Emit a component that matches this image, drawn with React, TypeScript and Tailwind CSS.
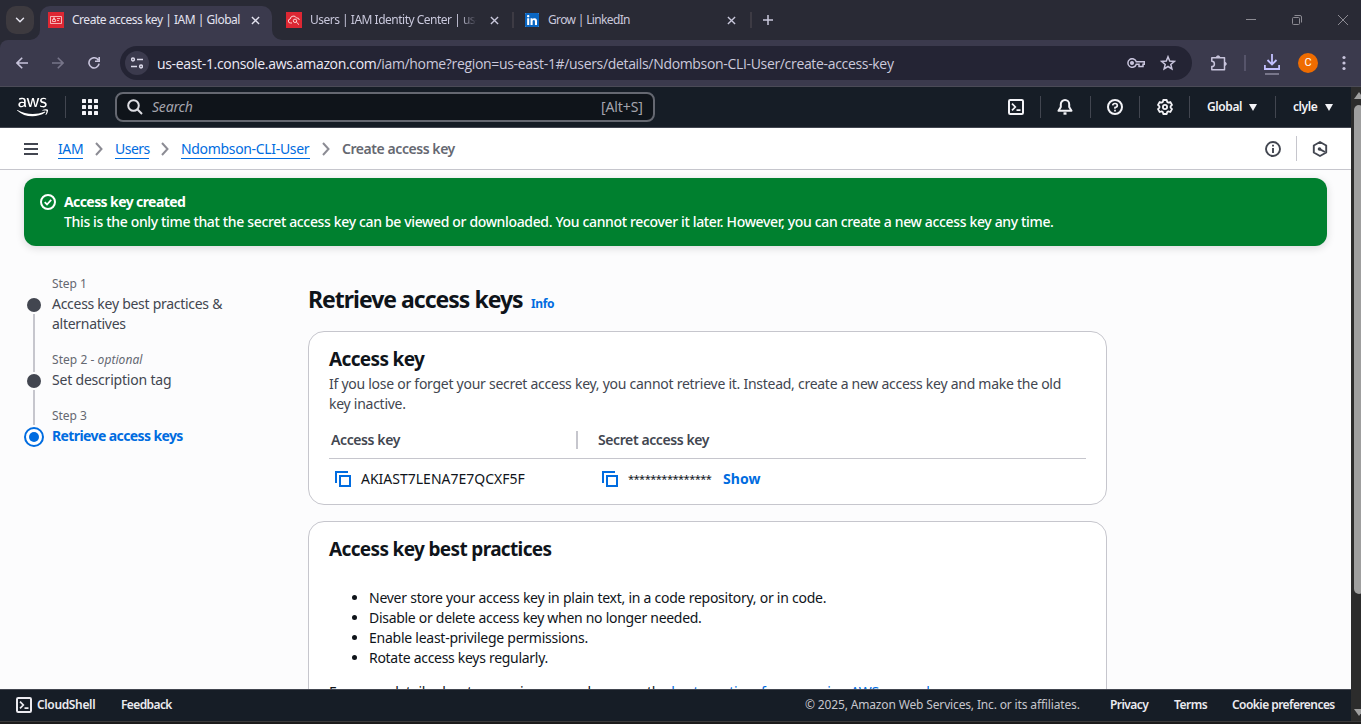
import React from "react";
import { FaAws, FaLinkedin } from "react-icons/fa";
import { ChevronDown } from "lucide-react";

const CloseX = ({ className }: { className: string }) => (
  <svg viewBox="0 0 10 10" className={className} fill="none" stroke="currentColor" strokeWidth="1.5">
    <path d="M1 1l8 8M9 1l-8 8" />
  </svg>
);

const Terminal = () => (
  <svg viewBox="0 0 16 16" className="size-4 shrink-0" fill="none" stroke="currentColor" strokeWidth="2" strokeLinejoin="round">
    <rect x="1" y="1" width="14" height="14" rx="1.2" />
    <path d="M4 4.6L7.3 8 4 11.4M8.5 11.2h4" strokeWidth="1.7" strokeLinejoin="miter" />
  </svg>
);

const Copy = () => (
  <svg viewBox="0 0 16 16" className="size-4 shrink-0 text-[#006ce0]" fill="none" stroke="currentColor" strokeWidth="2">
    <path d="M1 12V1h12" />
    <rect x="5" y="5" width="10" height="10" />
  </svg>
);

const Crumb = () => (
  <svg viewBox="0 0 8 14" className="h-3.5 w-2 shrink-0 text-[#8c8c94]" fill="none" stroke="currentColor" strokeWidth="2">
    <path d="M1 1l5.500 6L1 13" />
  </svg>
);

const Caret = () => (
  <svg viewBox="0 0 8 7" className="h-[7px] w-2 shrink-0" fill="currentColor">
    <path d="M0 0h8L4 7z" />
  </svg>
);

function TabStrip() {
  return (
    <div className="flex h-10 shrink-0 items-center bg-[#292a35] pt-0 text-[12px] text-[#c9c8dc]">
      <div className="ml-1.5 flex size-7 items-center justify-center rounded-[10px] bg-[#3d3a3f] text-[#e4e3ee]">
        <ChevronDown className="size-3.5" strokeWidth={2.5} />
      </div>
      <div className="relative ml-1.5 flex h-[34px] w-[232px] items-center self-end rounded-t-[10px] bg-[#3b3a4d] pb-1.5 pl-2 text-[#e4e3f0]">
        <svg viewBox="0 0 10 10" className="absolute bottom-0 -left-2.5 size-2.5 fill-[#3b3a4d]">
          <path d="M10 0v10H0A10 10 0 0 0 10 0z" />
        </svg>
        <svg viewBox="0 0 10 10" className="absolute -right-2.5 bottom-0 size-2.5 fill-[#3b3a4d]">
          <path d="M0 0v10h10A10 10 0 0 1 0 0z" />
        </svg>
        <svg viewBox="0 0 16 16" className="size-4 shrink-0" fill="none" stroke="#ffd5d5">
          <rect width="16" height="16" fill="#dd2733" stroke="none" />
          <path d="M2.5 4.5h11v7h-11zM9 6.5h3M9 8.5h2M4.5 9.500h3v-2h-3zM5.500 7V5.800h1V7" strokeWidth=".8" />
        </svg>
        <span className="ml-2 w-[170px] whitespace-nowrap tracking-[-0.48px]">Create access key | IAM | Global</span>
        <CloseX className="ml-[9px] size-[9px]" />
      </div>
      <svg viewBox="0 0 16 16" className="ml-3.5 size-4 shrink-0" fill="none" stroke="#ffd5d5">
        <rect width="16" height="16" fill="#dd2733" stroke="none" />
        <path d="M6 11H4.500a2 2 0 0 1-.3-4A3.300 3.300 0 0 1 10.500 6a2.300 2.300 0 0 1 2.800 2" strokeWidth="1" />
        <circle cx="9" cy="8.800" r="1.700" />
        <path d="M10.300 10l2.700 2.700" />
      </svg>
      <span className="ml-2 w-[167px] overflow-hidden whitespace-nowrap tracking-[-0.5px] [mask-image:linear-gradient(to_right,black_150px,transparent_167px)]">
        Users | IAM Identity Center | us-east-1
      </span>
      <CloseX className="ml-[13px] size-[9px]" />
      <div className="ml-[13px] h-4 w-0.5 bg-[#3d3b44]" />
      <span className="ml-[11px] flex h-[14px] w-[14px] items-center justify-center bg-white">
        <FaLinkedin className="h-4 w-[14px] shrink-0 text-[#0a66c2]" />
      </span>
      <span className="ml-[9px] w-[170px] whitespace-nowrap tracking-[-0.65px]">Grow | LinkedIn</span>
      <CloseX className="ml-[9px] size-[9px]" />
      <div className="ml-[14px] h-4 w-0.5 bg-[#3d3b44]" />
      <svg viewBox="0 0 10 10" className="ml-[11px] size-2.5" fill="none" stroke="currentColor" strokeWidth="1.500">
        <path d="M5 0v10M0 5h10" />
      </svg>
      <div className="ml-auto flex items-center gap-9 pr-[13px] text-[#8c8b93]">
        <svg viewBox="0 0 10 10" className="size-2.5" stroke="currentColor">
          <path d="M0 4.500h10" />
        </svg>
        <svg viewBox="0 0 10 10" className="size-2.5" fill="none" stroke="currentColor">
          <rect x=".5" y="2.500" width="7" height="7" rx="1" />
          <path d="M2.500 .5h5.500a1.500 1.500 0 0 1 1.500 1.500v5.500" />
        </svg>
        <svg viewBox="0 0 10 10" className="size-2.5" stroke="currentColor">
          <path d="M0 0l10 10M10 0L0 10" />
        </svg>
      </div>
    </div>
  );
}

function Toolbar() {
  return (
    <div className="h-[47px] shrink-0 bg-[#292a35]">
      <div className="flex h-full items-center rounded-tl-[8px] border-b border-[#4b4b57] bg-[#3b3a4d] text-[#c8c4dc]">
        <svg viewBox="0 0 12 12" className="ml-4 size-3" fill="none" stroke="currentColor" strokeWidth="1.600">
          <path d="M12 6H1M6.200 .8L1 6l5.200 5.200" />
        </svg>
        <svg viewBox="0 0 12 12" className="ml-6 size-3 text-[#777589]" fill="none" stroke="currentColor" strokeWidth="1.600">
          <path d="M0 6h11M5.800 .8L11 6l-5.200 5.200" />
        </svg>
        <svg viewBox="0 0 12 12" className="ml-6 size-3" fill="none" stroke="currentColor" strokeWidth="1.600">
          <path d="M10.300 3A5.100 5.100 0 1 0 11.100 6.700M11.200 0v4.200H7" />
        </svg>
        <div className="ml-5 flex h-[34px] w-[1072px] items-center rounded-full bg-[#242434] pl-[5px]">
          <span className="flex size-6 shrink-0 items-center justify-center rounded-full bg-[#3b3a4d] text-[#dcdaea]">
            <svg viewBox="0 0 12 12" className="size-3" fill="none" stroke="currentColor" strokeWidth="1.500">
              <circle cx="2" cy="2.500" r="1.400" />
              <path d="M6 2.500h6M0 9.500h6" />
              <circle cx="10" cy="9.500" r="1.400" />
            </svg>
          </span>
          <span className="ml-2 w-[970px] whitespace-nowrap font-['Open_Sans'] text-[14px] tracking-[-0.33px] text-[#cbc9dc]">
            <span className="text-[#eceaf6]">us-east-1.console.aws.amazon.com</span>
            /iam/home?region=us-east-1#/users/details/Ndombson-CLI-User/create-access-key
          </span>
          <svg viewBox="0 0 18 10" className="h-2.5 w-[18px] shrink-0" fill="none" stroke="currentColor" strokeWidth="1.500">
            <path d="M9.300 3.700A4.300 4.300 0 1 0 9.300 6.300H12V8.600H16V6.300H17.300V3.700z" />
            <circle cx="5" cy="5" r="1.300" fill="currentColor" />
          </svg>
          <svg viewBox="0 0 16 16" className="ml-[15px] size-4 shrink-0" fill="none" stroke="currentColor" strokeWidth="1.500">
            <path d="M8 1.800l1.700 4.300 4.600.3-3.500 3 1.100 4.500L8 11.500l-3.900 2.400 1.100-4.500-3.500-3 4.600-.3z" />
          </svg>
        </div>
        <svg viewBox="0 0 16 16" className="ml-[19px] size-4 shrink-0" fill="none" stroke="currentColor" strokeWidth="1.500" strokeLinejoin="round">
          <path d="M.8 2.800H13.500V14.800H.8V11.500A2.300 2.300 0 0 0 .8 6.300z" />
          <path d="M5.300 2.500a1.800 1.800 0 0 1 3.600 0zM13.700 7.200a1.600 1.600 0 0 1 0 3.300z" fill="currentColor" strokeWidth=".8" />
        </svg>
        <div className="ml-[17px] h-4 w-0.5 bg-[#56546a]" />
        <svg viewBox="0 0 16 22" className="ml-[18px] mt-1 h-[22px] w-4 shrink-0 text-[#c3c0ff]" fill="none" stroke="currentColor" strokeWidth="1.800">
          <path d="M8 0v10M3.500 6L8 10.500 12.500 6M.9 11v4h14.200v-4" />
          <path d="M1 20h14" stroke="#78768a" strokeWidth="2" />
        </svg>
        <div className="ml-[18px] flex size-5 items-center justify-center rounded-full bg-[#ef6c00] font-[Roboto] text-[11px] text-white">C</div>
        <svg viewBox="0 0 4 16" className="ml-6 h-4 w-1" fill="currentColor">
          <circle cx="2" cy="2.500" r="1.600" />
          <circle cx="2" cy="8" r="1.600" />
          <circle cx="2" cy="13.500" r="1.600" />
        </svg>
      </div>
    </div>
  );
}

const NavSep = ({ className }: { className: string }) => <div className={`h-[22px] w-px bg-[#424650] ${className}`} />;

function AwsNav() {
  return (
    <div className="flex h-[41px] shrink-0 items-center border-b border-[#424650] bg-[#161d26] text-[12px] font-semibold text-[#f3f3f7]">
      <FaAws className="ml-[17px] h-[26px] w-[31px] shrink-0 text-white" />
      <NavSep className="ml-[17px]" />
      <svg viewBox="0 0 16 16" className="ml-4 size-4 shrink-0" fill="currentColor">
        {[0, 6, 12].map((y) => [0, 6, 12].map((x) => <rect key={`${x}-${y}`} x={x} y={y} width="4" height="4" rx=".6" />))}
      </svg>
      <div className="mb-px ml-[17px] flex h-[30px] w-[540px] items-center rounded-lg border-2 border-[#656871] bg-[#0f141a] pl-2.5 text-[14px] font-normal text-[#a4a4ad]">
        <svg viewBox="0 0 16 16" className="size-4" fill="none" stroke="#dedee3" strokeWidth="2">
          <circle cx="6.500" cy="6.500" r="5.300" />
          <path d="M10.300 10.300l4.700 4.700" />
        </svg>
        <span className="ml-[9px] w-[449px] italic tracking-[-0.2px]">Search</span>
        <span className="whitespace-nowrap tracking-[-0.1px]">[Alt+S]</span>
      </div>
      <div className="ml-auto flex items-center">
        <Terminal />
        <NavSep className="ml-4" />
        <svg viewBox="0 0 16 16" className="ml-4 size-4" fill="none" stroke="currentColor" strokeWidth="2" strokeLinejoin="round">
          <path d="M8 1a4.200 4.200 0 0 0-4.200 4.200V8L1.500 11.800h13L12.200 8V5.200A4.200 4.200 0 0 0 8 1z" />
          <path d="M6.500 14.500h3" strokeWidth="2.400" />
        </svg>
        <NavSep className="ml-[17px]" />
        <svg viewBox="0 0 16 16" className="ml-4 size-4" fill="none" stroke="currentColor" strokeWidth="2">
          <circle cx="8" cy="8" r="7" />
          <path d="M5.700 6.300a2.300 2 0 1 1 2.300 2.200v1.300M8 10.800v1.700" strokeWidth="1.700" />
        </svg>
        <NavSep className="ml-4" />
        <svg viewBox="0 0 16 16" className="ml-[17px] size-4" fill="none" stroke="currentColor" strokeWidth="1.800" strokeLinejoin="round">
          <path d="M6.300 1h3.400l.5 2 1.100.6 2-.6 1.700 2.900-1.400 1.400v1.400l1.400 1.400-1.700 2.900-2-.6-1.100.6-.5 2H6.300l-.5-2-1.100-.6-2 .6L1 10.100l1.400-1.400V7.300L1 5.900 2.700 3l2 .6L5.800 3z" />
          <circle cx="8" cy="8" r="2.100" />
        </svg>
        <NavSep className="ml-4" />
        <span className="ml-[17px] w-[42px] tracking-[-0.4px]">Global</span>
        <Caret />
        <NavSep className="ml-[18px]" />
        <span className="ml-[17px] w-8 tracking-[-0.4px]">clyle</span>
        <Caret />
        <div className="w-[18px]" />
      </div>
    </div>
  );
}

function Breadcrumbs() {
  const link = "mt-0.5 border-b border-[#006ce0] leading-[18px] text-[#006ce0] whitespace-nowrap h-[19px]";
  return (
    <div className="flex h-[42px] shrink-0 items-center border-b border-[#c6c6cd] bg-white text-[14px] text-[#424650]">
      <svg viewBox="0 0 14 12" className="ml-6 h-3 w-3.5" stroke="currentColor" strokeWidth="2">
        <path d="M0 1h14M0 6h14M0 11h14" />
      </svg>
      <span className={`ml-5 w-[25px] tracking-[-0.4px] ${link}`}>IAM</span>
      <span className="ml-3 flex">
        <Crumb />
      </span>
      <span className={`ml-3 w-[34px] tracking-[-0.5px] ${link}`}>Users</span>
      <span className="ml-3 flex">
        <Crumb />
      </span>
      <span className={`ml-3 w-[129px] tracking-[-0.33px] ${link}`}>Ndombson-CLI-User</span>
      <span className="ml-3 flex">
        <Crumb />
      </span>
      <span className="ml-3 whitespace-nowrap font-semibold tracking-[-0.44px] text-[#656871]">Create access key</span>
      <svg viewBox="0 0 16 16" className="ml-auto size-4" fill="none" stroke="currentColor" strokeWidth="1.900">
        <circle cx="8" cy="8" r="7" />
        <path d="M8 3.800v1.800M8 7v5" />
      </svg>
      <div className="ml-[15px] h-[25px] w-px bg-[#c6c6cd]" />
      <svg viewBox="0 0 16 16" className="ml-[15px] mr-[23px] size-4" fill="none" stroke="currentColor" strokeWidth="1.900" strokeLinejoin="round">
        <path d="M8 1l6.200 3.500v7L8 15l-6.200-3.500v-7z" />
        <circle cx="7.500" cy="8" r="1.800" fill="currentColor" stroke="none" />
        <path d="M8 8.300l5 2.700" />
      </svg>
    </div>
  );
}

function Steps() {
  return (
    <div className="flex w-[284px] shrink-0 pl-6 pt-7">
      <svg viewBox="0 0 20 190" className="h-[190px] w-5 shrink-0">
        <circle cx="10" cy="31" r="7" fill="#424650" />
        <path d="M10 40v58M10 116v35" stroke="#c6c6cd" strokeWidth="2" />
        <circle cx="10" cy="107" r="7" fill="#424650" />
        <circle cx="10" cy="163" r="9" fill="white" stroke="#006ce0" strokeWidth="2" />
        <circle cx="10" cy="163" r="5" fill="#006ce0" />
      </svg>
      <div className="ml-2 flex flex-col gap-4 text-[14px] leading-5 tracking-[-0.28px] text-[#424650]">
        <div>
          <div className="text-[12px] tracking-[-0.03px] text-[#656871]">Step 1</div>
          <div className="w-[190px]">Access key best practices &amp; alternatives</div>
        </div>
        <div>
          <div className="text-[12px] tracking-[0.05px] text-[#656871]">
            Step 2 - <i>optional</i>
          </div>
          <div className="tracking-[-0.2px]">Set description tag</div>
        </div>
        <div>
          <div className="text-[12px] tracking-[-0.03px] text-[#656871]">Step 3</div>
          <div className="font-bold tracking-[-0.6px] text-[#006ce0]">Retrieve access keys</div>
        </div>
      </div>
    </div>
  );
}

function Content() {
  return (
    <div className="flex min-h-0 grow flex-col overflow-hidden bg-[#fcfcfd]">
      <div className="mx-6 mt-2 flex h-[68px] shrink-0 rounded-xl bg-[#00802f] px-4 pt-3.5 text-[14px] leading-5 text-white shadow-[0_2px_8px_rgba(0,7,22,0.14)]">
        <svg viewBox="0 0 16 16" className="mt-0.5 size-4 shrink-0" fill="none" stroke="currentColor" strokeWidth="2">
          <circle cx="8" cy="8" r="7" />
          <path d="M4.700 8.200l2.300 2.300 4.200-4.600" strokeWidth="1.800" />
        </svg>
        <div className="ml-2 whitespace-nowrap">
          <div className="font-bold tracking-[-0.59px]">Access key created</div>
          <div className="font-medium tracking-[-0.35px]">
            This is the only time that the secret access key can be viewed or downloaded. You cannot recover it later. However, you can create a new access key any time.
          </div>
        </div>
      </div>
      <div className="flex min-h-0 grow overflow-hidden">
        <Steps />
        <div className="ml-6 w-[799px] shrink-0 pt-[38px]">
          <div className="flex h-[30px] items-baseline text-[#0f141a]">
            <h1 className="w-[223px] whitespace-nowrap text-[23px] leading-[30px] font-bold tracking-[-1px]">Retrieve access keys</h1>
            <span className="text-[12px] font-bold tracking-[-0.4px] text-[#006ce0]">Info</span>
          </div>
          <section className="mt-[17px] h-[174px] rounded-2xl border border-[#c6c6cd] bg-white px-5 pt-[15px] text-[14px] leading-5 text-[#424650]">
            <h2 className="text-[19px] leading-6 font-bold tracking-[-0.65px] text-[#0f141a]">Access key</h2>
            <p className="mt-[3px] whitespace-nowrap tracking-[-0.265px]">
              If you lose or forget your secret access key, you cannot retrieve it. Instead, create a new access key and make the old
              <br />
              key inactive.
            </p>
            <div className="mt-2 flex h-[37px] items-center border-b border-[#c6c6cd] font-semibold tracking-[-0.4px]">
              <span className="w-[247px] pl-0.5">Access key</span>
              <span className="h-[18px] w-0.5 bg-[#c6c6cd]" />
              <span className="ml-5">Secret access key</span>
            </div>
            <div className="flex h-10 items-center pl-1.5 text-[#0f141a]">
              <Copy />
              <span className="ml-2.5 w-[241px]">AKIAST7LENA7E7QCXF5F</span>
              <Copy />
              <span className="ml-2.5 w-[95px] text-[11px] tracking-[-0.5px]">***************</span>
              <span className="font-bold tracking-[0.05px] text-[#006ce0]">Show</span>
            </div>
          </section>
          <section className="mt-4 h-[240px] rounded-2xl border border-[#c6c6cd] bg-white px-5 pt-[15px] text-[14px] leading-5 whitespace-nowrap text-[#0f141a]">
            <h2 className="text-[19px] leading-6 font-bold tracking-[-0.65px]">Access key best practices</h2>
            <ul className="mt-[27px] list-disc pl-10 tracking-[-0.29px]">
              <li className="tracking-[-0.25px]">Never store your access key in plain text, in a code repository, or in code.</li>
              <li>Disable or delete access key when no longer needed.</li>
              <li className="tracking-[-0.25px]">Enable least-privilege permissions.</li>
              <li>Rotate access keys regularly.</li>
            </ul>
            <p className="mt-3.5 tracking-[-0.29px]">
              For more details about managing access keys, see the <span className="text-[#006ce0]">best practices for managing AWS access keys.</span>
            </p>
          </section>
        </div>
      </div>
    </div>
  );
}

function Footer() {
  return (
    <div className="flex h-[32px] shrink-0 items-center border-t border-[#424650] bg-[#161d26] pb-px text-[12px] font-semibold whitespace-nowrap text-[#ebebf0]">
      <span className="ml-4 flex">
        <Terminal />
      </span>
      <span className="ml-[5px] w-[84px] tracking-[-0.35px]">CloudShell</span>
      <span className="tracking-[-0.6px]">Feedback</span>
      <span className="ml-auto w-[305px] font-normal tracking-[-0.15px] text-[#c6c6cd]">© 2025, Amazon Web Services, Inc. or its affiliates.</span>
      <span className="w-16 tracking-[-0.55px]">Privacy</span>
      <span className="w-[58px] tracking-[-0.5px]">Terms</span>
      <span className="w-[119px] tracking-[-0.55px]">Cookie preferences</span>
    </div>
  );
}

export default function App() {
  return (
    <div className="flex h-[724px] w-[1361px] flex-col overflow-hidden bg-[#1c1c1c] font-['Noto_Sans','Open_Sans',sans-serif]">
      <TabStrip />
      <Toolbar />
      <div className="flex h-[634px] shrink-0">
        <div className="flex w-[1351px] shrink-0 flex-col">
          <AwsNav />
          <Breadcrumbs />
          <Content />
          <Footer />
        </div>
        <div className="flex w-2.5 flex-col overflow-hidden bg-[#2c2c2c] pl-[3px]">
          <svg viewBox="0 0 10 7" className="mt-[5px] h-[7px] w-2.5 shrink-0 fill-[#9f9f9f]">
            <path d="M5 0l5 7H0z" />
          </svg>
          <div className="mt-1.5 h-[489px] w-2.5 shrink-0 rounded-full bg-[#9f9f9f]" />
          <svg viewBox="0 0 10 7" className="mt-auto mb-[5px] h-[7px] w-2.5 shrink-0 fill-[#9f9f9f]">
            <path d="M5 7L0 0h10z" />
          </svg>
        </div>
      </div>
      <div className="h-[3px] border-t border-[#3a3a3a] bg-[#1c1c1c]" />
    </div>
  );
}
